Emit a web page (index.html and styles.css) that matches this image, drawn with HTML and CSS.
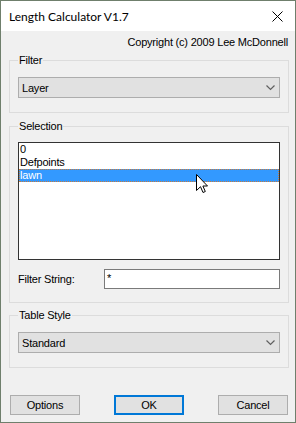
FILE: index.html
```html
<!DOCTYPE html>
<html lang="en">

<head>
    <meta charset="UTF-8">
    <meta name="viewport" content="width=device-width, initial-scale=1.0">
    <title>Length Calculator V1.7</title>
    <link rel="stylesheet" href="styles.css">
</head>

<body>
    <div class="window">
        <div class="titlebar">
            <span class="title">Length Calculator V1.7</span>
            <svg class="close" width="11" height="11" viewBox="0 0 11 11">
                <path d="M0.5 0.5 L10.5 10.5 M10.5 0.5 L0.5 10.5" stroke="#000" stroke-width="1" fill="none" />
            </svg>
        </div>
        <div class="client">
            <div class="copyright">Copyright (c) 2009 Lee McDonnell</div>

            <fieldset class="group group-filter">
                <legend>Filter</legend>
                <div class="combo">
                    <span>Layer</span>
                    <svg class="chevron" width="9" height="6" viewBox="0 0 9 6">
                        <path d="M0.5 0.5 L4.5 4.5 L8.5 0.5" stroke="#606060" stroke-width="1.2" fill="none" />
                    </svg>
                </div>
            </fieldset>

            <fieldset class="group group-selection">
                <legend>Selection</legend>
                <div class="listbox">
                    <div class="item">0</div>
                    <div class="item">Defpoints</div>
                    <div class="item selected">lawn</div>
                    <svg class="pointer" width="13" height="20" viewBox="0 0 13 20">
                        <path d="M0.5 0.5 L0.5 16.5 L4.5 12.7 L7 18.5 L9.3 17.5 L6.9 12 L11.5 12 Z" fill="#fff" stroke="#000" stroke-width="1" stroke-linejoin="miter" />
                    </svg>
                </div>
                <div class="filter-row">
                    <span class="label">Filter String:</span>
                    <div class="textbox">*</div>
                </div>
            </fieldset>

            <fieldset class="group group-table">
                <legend>Table Style</legend>
                <div class="combo">
                    <span>Standard</span>
                    <svg class="chevron" width="9" height="6" viewBox="0 0 9 6">
                        <path d="M0.5 0.5 L4.5 4.5 L8.5 0.5" stroke="#606060" stroke-width="1.2" fill="none" />
                    </svg>
                </div>
            </fieldset>

            <div class="buttons">
                <div class="button">Options</div>
                <div class="button default">OK</div>
                <div class="button">Cancel</div>
            </div>
        </div>
    </div>
</body>

</html>
```

FILE: styles.css
```css
html,
body {
    margin: 0;
    font-family: "Liberation Sans", Arial, sans-serif;
    font-size: 11px;
    letter-spacing: -0.2px;
    color: #000;
    overflow: hidden;
}

.window {
    width: 296px;
    height: 423px;
    box-sizing: border-box;
    border: 1px solid #6f7f6c;
    display: flex;
    flex-direction: column;
    background-color: #f0f0f0;
}

.titlebar {
    height: 30px;
    background-color: #fff;
    display: flex;
    align-items: center;
    justify-content: space-between;
    padding: 0 12px 0 8px;
    flex-shrink: 0;
}

.title {
    font-family: Lato, "Noto Sans", sans-serif;
    font-size: 12px;
    letter-spacing: 0;
    color: #000;
}

.close {
    display: block;
}

.client {
    flex: 1;
    display: flex;
    flex-direction: column;
    padding: 0 6px 0 8px;
}

.copyright {
    text-align: right;
    line-height: 13px;
    margin-top: 5px;
    padding-right: 1px;
}

.group {
    margin: 0;
    border: 1px solid #dcdcdc;
    padding: 10px 8px 14px 8px;
    min-width: 0;
}

.group legend {
    padding: 0 1px;
    line-height: 13px;
}

.group-filter {
    margin-top: 5px;
}

.group-selection {
    margin-top: 7px;
    padding-top: 9px;
    padding-bottom: 13px;
}

.group-table {
    margin-top: 6px;
}

.combo {
    height: 21px;
    box-sizing: border-box;
    border: 1px solid #adadad;
    background-color: #e1e1e1;
    display: flex;
    align-items: center;
    justify-content: space-between;
    padding: 0 4px 0 3px;
}

.chevron {
    display: block;
}

.listbox {
    position: relative;
    height: 118px;
    box-sizing: border-box;
    border: 1px solid #333;
    background-color: #fff;
}

.item {
    height: 13px;
    line-height: 13px;
    padding-left: 1px;
}

.item.selected {
    background-color: #3399ff;
    color: #fff;
    outline: 1px dotted #c77a3a;
    outline-offset: -1px;
}

.pointer {
    position: absolute;
    left: 177px;
    top: 31px;
}

.filter-row {
    display: flex;
    align-items: center;
    margin-top: 9px;
}

.label {
    width: 86px;
}

.textbox {
    flex: 1;
    height: 20px;
    box-sizing: border-box;
    border: 1px solid #7a7a7a;
    background-color: #fff;
    padding: 1px 2px;
    line-height: 14px;
}

.buttons {
    display: flex;
    justify-content: space-between;
    margin-top: 27px;
    padding: 0 1px;
}

.button {
    width: 70px;
    height: 20px;
    box-sizing: border-box;
    border: 1px solid #adadad;
    background-color: #e1e1e1;
    display: flex;
    align-items: center;
    justify-content: center;
}

.button.default {
    border: 2px solid #0078d7;
}
```
